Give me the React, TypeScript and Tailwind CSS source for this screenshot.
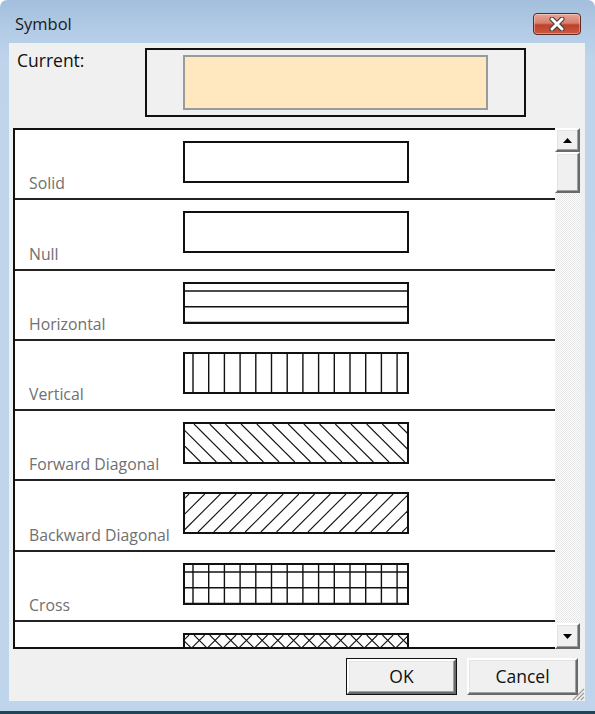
import React from "react";

const P = 15.7;
const W = 222;
const H = 38;

function Pattern({ kind }: { kind: string }) {
  const lines: React.ReactNode[] = [];
  let k = 0;
  const stroke = "#111";
  if (kind === "h" || kind === "cross") {
    for (let y = 7; y < H + 2; y += P) {
      lines.push(<line key={k++} x1={0} x2={W} y1={y} y2={y} stroke={stroke} strokeWidth={1.4} />);
    }
  }
  if (kind === "v" || kind === "cross") {
    for (let x = 8; x < W + 2; x += P) {
      lines.push(<line key={k++} x1={x} x2={x} y1={0} y2={H} stroke={stroke} strokeWidth={1.4} />);
    }
  }
  if (kind === "fd" || kind === "dc") {
    for (let x = 9 - P * 4; x < W + 2; x += P) {
      lines.push(<line key={k++} x1={x} x2={x + H} y1={0} y2={H} stroke={stroke} strokeWidth={1.1} />);
    }
  }
  if (kind === "bd" || kind === "dc") {
    for (let x = 4; x < W + H + P; x += P) {
      lines.push(<line key={k++} x1={x} x2={x - H} y1={0} y2={H} stroke={stroke} strokeWidth={1.1} />);
    }
  }
  return (
    <svg width={W} height={H} className="block">
      {lines}
    </svg>
  );
}

const rows = [
  { label: "Solid", kind: "solid" },
  { label: "Null", kind: "null" },
  { label: "Horizontal", kind: "h" },
  { label: "Vertical", kind: "v" },
  { label: "Forward Diagonal", kind: "fd" },
  { label: "Backward Diagonal", kind: "bd" },
  { label: "Cross", kind: "cross" },
  { label: "", kind: "dc" },
];

function Btn3D({ children, className }: { children?: React.ReactNode; className?: string }) {
  return (
    <div
      className={
        "bg-[#f0f0f0] border-t-2 border-l-2 border-r-2 border-b-2 border-t-white border-l-white border-r-[#696969] border-b-[#696969] shadow-[inset_-1px_-1px_0_#a0a0a0,inset_1px_1px_0_#e3e3e3] " +
        (className ?? "")
      }
    >
      {children}
    </div>
  );
}

export default function App() {
  const font = { fontFamily: '"Open Sans", "Noto Sans", sans-serif' };
  return (
    <div
      className="w-[595px] h-[714px] flex flex-col rounded-t-[7px] bg-[linear-gradient(180deg,#a3bfdc_0px,#b3cbe5_30px,#bdd4eb_60px,#bfd5ec_100%)] overflow-hidden"
      style={font}
    >
      {/* title bar */}
      <div className="h-[43px] flex justify-between shrink-0">
        <div className="pl-[15px] pt-[13px] text-[16.5px] leading-[22px] text-[#1a1a1a]">Symbol</div>
        <div className="mt-[13px] mr-[14px] w-[48px] h-[22px] rounded-[4px] border border-[#5b2a24] bg-[linear-gradient(180deg,#e9a597_0%,#d7806d_45%,#c0402a_55%,#c95a3f_100%)] shadow-[inset_0_0_0_1px_rgba(255,255,255,0.35)] flex items-center justify-center">
          <svg width="18" height="14" viewBox="0 0 18 14">
            <path d="M4 2 L14 12 M14 2 L4 12" stroke="#3b3b3b" strokeWidth="5" strokeLinecap="round" />
            <path d="M4 2 L14 12 M14 2 L4 12" stroke="#ffffff" strokeWidth="3" strokeLinecap="round" />
          </svg>
        </div>
      </div>

      {/* body */}
      <div className="ml-[9px] mr-[10px] h-[658px] shrink-0 bg-[#f0f0f0] flex flex-col relative pt-[5px]">
        <div className="flex h-[69px]">
          <div className="w-[136px] pl-[8px] mt-[1px] text-[17.5px] leading-[22px] text-[#111]">Current:</div>
          <div className="w-[381px] h-[69px] border-2 border-[#111] pl-[36px] pt-[5px]">
            <div className="w-[305px] h-[55px] bg-[#ffe8c0] border-2 border-[#9a9a9a]" />
          </div>
        </div>

        <div className="ml-[4px] mt-[11px] w-[567px] h-[521px] flex">
          <div className="w-[542px] h-[521px] border-2 border-r-0 border-[#111] bg-white overflow-hidden">
            {rows.map((r, i) => (
              <div key={i} className="h-[70.3px] border-b-2 border-[#222] flex shrink-0">
                <div className="w-[168px] pl-[14px] flex items-end pb-[5px] text-[15.8px] leading-[20px] text-[#707070] whitespace-nowrap">
                  {r.label}
                </div>
                <div className="mt-[11px] w-[226px] h-[42px] border-2 border-[#111] bg-white shrink-0">
                  {r.kind !== "solid" && r.kind !== "null" ? <Pattern kind={r.kind} /> : null}
                </div>
              </div>
            ))}
          </div>
          {/* scrollbar */}
          <div className="w-[25px] h-[521px] flex flex-col bg-[repeating-conic-gradient(#e6e6e6_0%_25%,#ffffff_0%_50%)] bg-[length:2px_2px]">
            <Btn3D className="h-[24px] w-[25px] flex items-center justify-center shrink-0">
              <svg width="9" height="5" viewBox="0 0 9 5">
                <path d="M0 5 L4.5 0 L9 5 Z" fill="#000" />
              </svg>
            </Btn3D>
            <Btn3D className="h-[41px] w-[25px] shrink-0" />
            <div className="flex-1" />
            <Btn3D className="h-[26px] w-[25px] flex items-center justify-center shrink-0">
              <svg width="9" height="5" viewBox="0 0 9 5">
                <path d="M0 0 L4.5 5 L9 0 Z" fill="#000" />
              </svg>
            </Btn3D>
          </div>
        </div>

        <div className="flex justify-end gap-[10px] pr-[7px] mt-[9px]">
          <div className="w-[111px] h-[37px] border border-[#111] flex">
            <Btn3D className="flex-1 flex items-center justify-center text-[17.5px] text-[#111]">OK</Btn3D>
          </div>
          <Btn3D className="w-[111px] h-[37px] flex items-center justify-center text-[17.5px] text-[#111]">Cancel</Btn3D>
        </div>

        <svg width="14" height="14" viewBox="0 0 14 14" className="absolute right-[0px] bottom-[0px]">
          <path d="M13 3 L3 13 M13 7 L7 13 M13 11 L11 13" stroke="#ffffff" strokeWidth="1" />
          <path d="M13 2 L2 13 M13 6 L6 13 M13 10 L10 13" stroke="#9a9a9a" strokeWidth="1.2" />
        </svg>
      </div>

      <div className="h-[10px] shrink-0" />
      <div className="h-[3px] shrink-0 bg-[#1e4656]" />
    </div>
  );
}
